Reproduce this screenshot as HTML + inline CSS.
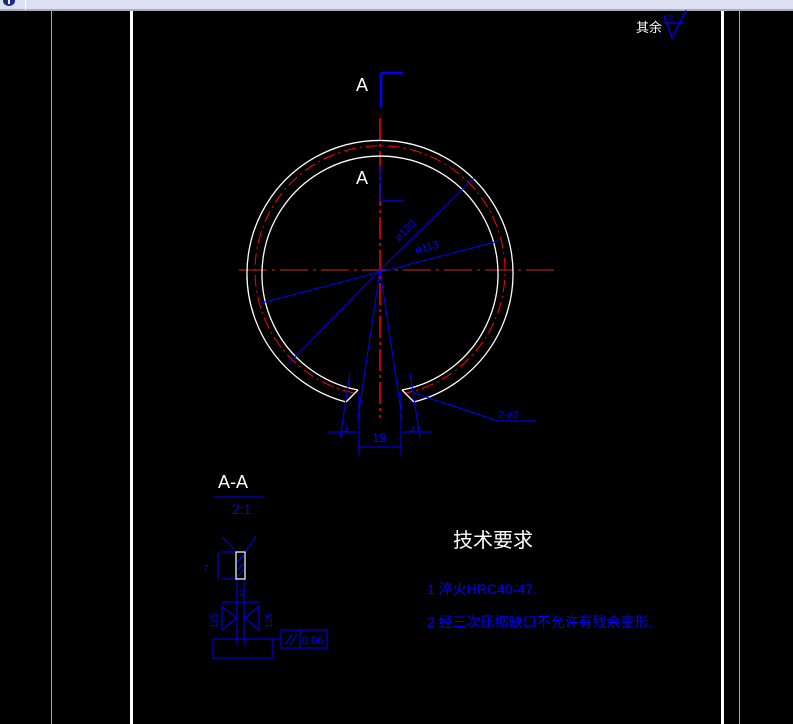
<!DOCTYPE html>
<html><head><meta charset="utf-8"><style>
html,body{margin:0;padding:0;background:#000;width:793px;height:724px;overflow:hidden}
svg{display:block}
text{font-family:"Liberation Sans","Noto Sans CJK SC",sans-serif}
</style></head><body>
<svg width="793" height="724" viewBox="0 0 793 724" xmlns="http://www.w3.org/2000/svg">
<rect x="0" y="0" width="793" height="724" fill="#000"/>
<rect x="0" y="0" width="793" height="10" fill="#dce0f0"/>
<rect x="0" y="9" width="793" height="2" fill="#a8acb8"/>
<rect x="25" y="0" width="1" height="10" fill="#fff"/>
<ellipse cx="9" cy="1" rx="6" ry="5" fill="#1a2a8a"/>
<rect x="8" y="0" width="2" height="4" fill="#fff"/>
<!-- frame lines -->
<rect x="51" y="11" width="1" height="713" fill="#2ee0e0"/>
<rect x="130" y="11" width="3" height="713" fill="#fff"/>
<rect x="721" y="11" width="3" height="713" fill="#fff"/>
<rect x="739" y="11" width="1" height="713" fill="#2ee0e0"/>
<!-- roughness -->
<text x="636" y="32" fill="#fff" font-size="13">其余</text>
<text x="666" y="20" fill="#0000ff" font-size="7">25</text>
<path d="M664 23 L684 23 M664 16 L672 38 L686 10" stroke="#0000ff" fill="none" stroke-width="1.2"/>
<!-- center lines -->
<line x1="239" y1="270" x2="555" y2="270" stroke="#d02828" stroke-width="1" stroke-dasharray="28,5,3,5"/>
<line x1="380" y1="118" x2="380" y2="418" stroke="#ff0000" stroke-width="1.5" stroke-dasharray="22,4,3,4"/>
<!-- ring -->
<path d="M346 402 A133 133 0 1 1 414 402" stroke="#fff" fill="none" stroke-width="1.3"/>
<path d="M358 390 A118 118 0 1 1 402 390" stroke="#fff" fill="none" stroke-width="1.3"/>
<path d="M346 402 L358 390 M414 402 L402 390" stroke="#fff" stroke-width="1.3"/>
<path d="M354 393 A125 125 0 1 1 406 393" stroke="#ff0000" fill="none" stroke-width="1" stroke-dasharray="12,4,2,4"/>
<!-- section markers -->
<text x="356" y="91" fill="#fff" font-size="18">A</text>
<text x="356" y="184" fill="#fff" font-size="18">A</text>
<path d="M381 73 L381 108 M381 73 L403 73" stroke="#0000ff" stroke-width="2.5" fill="none"/>
<path d="M380 165 L380 201 L404 201" stroke="#0000ff" stroke-width="1.2" fill="none"/>
<!-- dim lines -->
<g stroke="#0000ff" stroke-width="1" fill="none">
<line x1="380" y1="270" x2="474" y2="178"/>
<line x1="380" y1="270" x2="287" y2="365"/>
<line x1="261" y1="303" x2="499" y2="241"/>
<line x1="380" y1="270" x2="358" y2="418"/>
<line x1="380" y1="270" x2="402" y2="418"/>
<line x1="359" y1="392" x2="359" y2="455"/>
<line x1="401" y1="392" x2="401" y2="455"/>
<line x1="359" y1="447" x2="401" y2="447"/>
<line x1="350" y1="373" x2="340" y2="438"/>
<line x1="410" y1="373" x2="420" y2="438"/>
<line x1="328" y1="432" x2="358" y2="432"/>
<line x1="402" y1="432" x2="432" y2="432"/>
<path d="M414 393 L498 421 L536 421"/>
</g>
<text x="0" y="0" fill="#0000ff" font-size="11" transform="translate(399,242) rotate(-45)">ø120</text>
<text x="0" y="0" fill="#0000ff" font-size="11" transform="translate(416,254) rotate(-15)">ø113</text>
<text x="372" y="442" fill="#0000ff" font-size="13">19</text>
<text x="343" y="433" fill="#0000ff" font-size="10">4</text>
<text x="410" y="433" fill="#0000ff" font-size="10">4</text>
<text x="498" y="418" fill="#0000ff" font-size="10">2-ø2</text>
<!-- section view -->
<text x="218" y="488" fill="#fff" font-size="18">A-A</text>
<line x1="214" y1="497" x2="263" y2="497" stroke="#0000ff"/>
<text x="232" y="514" fill="#0000ff" font-size="14">2:1</text>
<g stroke="#0000ff" stroke-width="1" fill="none">
<path d="M222 537 L232 547 L236 552 M256 536 L250 545 L245 552"/>
<path d="M221 552 L236 552 M221 579 L236 579 M218 552 L218 579"/>
<path d="M237 579 L237 645 M244 579 L244 645"/>
<path d="M222 602 L260 602"/>
<path d="M222 606 L236 618 L222 630 Z M259 606 L245 618 L259 630 Z"/>
<rect x="213" y="639" width="60" height="19"/>
<rect x="281" y="630" width="46" height="18"/>
<line x1="300" y1="630" x2="300" y2="648"/>
<line x1="273" y1="639" x2="281" y2="639"/>
<path d="M285 645 L292 634 M290 645 L297 634"/>
</g>
<rect x="236" y="552" width="9" height="27" fill="none" stroke="#fff" stroke-width="1.2"/>
<path d="M237 562 L244 555 M237 570 L244 563 M237 577 L244 570" stroke="#0000ff"/>
<text x="203" y="572" fill="#0000ff" font-size="10">7</text>
<text x="239" y="596" fill="#0000ff" font-size="10">1</text>
<text x="0" y="0" fill="#0000ff" font-size="9" transform="translate(217,628) rotate(-90)">125</text>
<text x="0" y="0" fill="#0000ff" font-size="9" transform="translate(272,628) rotate(-90)">125</text>
<text x="302" y="644" fill="#0000ff" font-size="11">0.06</text>
<!-- tech requirements -->
<text x="453" y="547" fill="#fff" font-size="20">技术要求</text>
<text x="427" y="594" fill="#0000ff" font-size="14">1 淬火HRC40-47.</text>
<text x="427" y="627" fill="#0000ff" font-size="14">2 经三次压缩缺口不允许有残余变形.</text>
</svg>
</body></html>
